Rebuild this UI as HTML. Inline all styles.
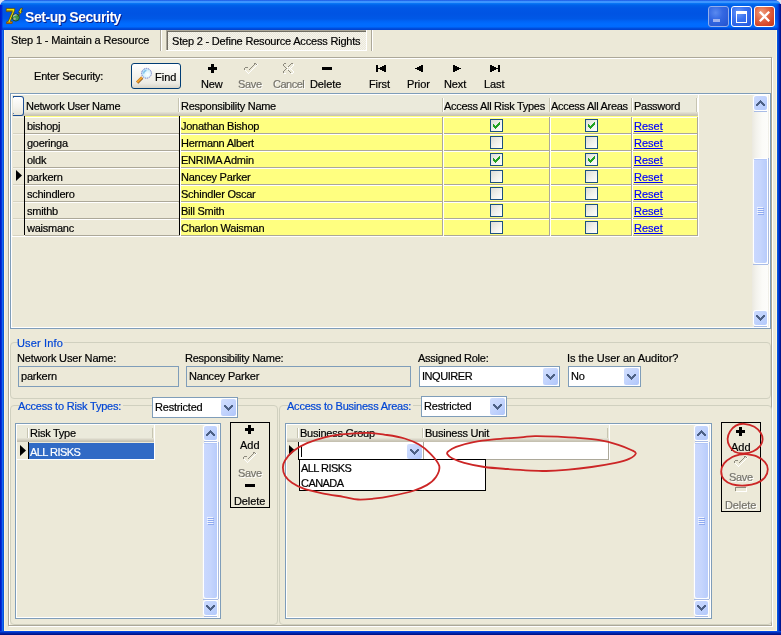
<!DOCTYPE html>
<html><head><meta charset="utf-8"><style>
html,body{margin:0;padding:0;width:781px;height:635px;overflow:hidden;background:#dbe4f5}
#w{position:relative;width:781px;height:635px;overflow:hidden}
#w div{position:absolute;box-sizing:content-box}
.t{font-family:"Liberation Sans",sans-serif;font-size:11px;line-height:13px;white-space:nowrap;color:#000;transform:translateZ(0);-webkit-text-stroke:0.2px currentColor}
</style></head><body><div id="w">
<div style="left:0;top:0;width:781px;height:635px;background:#0831d9;border-radius:7px 7px 0 0"></div>
<div style="left:0;top:0;width:781px;height:30px;border-radius:7px 7px 0 0;background:linear-gradient(to bottom,#0a3ad8 0px,#3d95ff 1px,#3d95ff 3px,#0a7cf8 3px,#0062ea 5px,#0057e5 8px,#0054e3 14px,#0058e6 19px,#0063f5 21px,#006cff 24px,#006afe 27px,#0052e0 28px,#0040cf 30px)"></div>
<div style="left:0px;top:30px;width:1px;height:605px;background:#001ec4"></div>
<div style="left:1px;top:30px;width:1px;height:605px;background:#0831d9"></div>
<div style="left:2px;top:30px;width:1px;height:605px;background:#166aee"></div>
<div style="left:3px;top:30px;width:1px;height:605px;background:#0855dd"></div>
<div style="left:777px;top:30px;width:1px;height:605px;background:#0855dd"></div>
<div style="left:778px;top:30px;width:1px;height:605px;background:#0040d0"></div>
<div style="left:779px;top:30px;width:1px;height:605px;background:#0021b0"></div>
<div style="left:780px;top:30px;width:1px;height:605px;background:#001590"></div>
<div style="left:0px;top:631px;width:781px;height:1px;background:#0848e0"></div>
<div style="left:0px;top:632px;width:781px;height:1px;background:#0030c0"></div>
<div style="left:0px;top:633px;width:781px;height:1px;background:#0020a0"></div>
<div style="left:0px;top:634px;width:781px;height:1px;background:#001288"></div>
<div style="left:4px;top:30px;width:773px;height:601px;background:#ece9d8"></div>
<div style="left:4px;top:30px;width:1px;height:601px;background:#fbf5dc"></div>
<div style="left:776px;top:30px;width:1px;height:601px;background:#fff8dc"></div>
<div style="left:4px;top:630px;width:773px;height:1px;background:#fff8dc"></div>
<svg style="position:absolute;left:3px;top:4px;" width="22" height="22" viewBox="0 0 22 22" shape-rendering="crispEdges">
<g shape-rendering="auto">
<defs><linearGradient id="y7" x1="0" y1="0" x2="0" y2="1"><stop offset="0" stop-color="#ffff40"/><stop offset="0.6" stop-color="#e8d800"/><stop offset="1" stop-color="#8a6a00"/></linearGradient></defs>
<path d="M3.2 4.4 H11.8 L11.6 6.6 L7.2 17.6 L9.4 17.6 L9.2 19.4 H3.4 L3.8 17.6 L5.2 17.6 L9.4 7.6 H3.4 Z" fill="#f4e800" stroke="#5a4000" stroke-width="0.7"/>
<path d="M3.6 7.0 H9.6 L9.9 6.2 H3.6 Z" fill="#9a7a00"/>
<path d="M3.6 19.0 H9.0" stroke="#b03a00" stroke-width="1.1"/>
<circle cx="12.8" cy="13.5" r="3.6" fill="#3f9a4a" stroke="#1a3a20" stroke-width="0.8"/>
<path d="M10.2 12.5 Q11.5 10.6 13.6 11.0" stroke="#c8c8c8" stroke-width="1.2" fill="none"/>
<circle cx="11.6" cy="14.8" r="1.2" fill="#a0a8a0"/>
<path d="M17.6 4.2 L15.4 8.6 L17.0 8.6 L15.0 12.4 L19.4 7.4 L17.8 7.4 L19.6 4.2 Z" fill="#ffee00" stroke="#3a3000" stroke-width="0.6"/>
</g></svg>
<div class="t" style="left:25px;top:9px;font-weight:bold;font-size:14px;line-height:16px;color:#fff;text-shadow:1px 1px 0 #0a1f8a;letter-spacing:-0.45px;-webkit-text-stroke:0">Set-up Security</div>
<div style="left:708px;top:6px;width:19px;height:19px;border:1px solid #94aeea;border-radius:3px;background:radial-gradient(circle at 35% 30%, #5a8af0 0%, #3468e2 40%, #2a5cd8 75%, #2450c8 100%)"></div>
<div style="left:713px;top:19px;width:7px;height:3px;background:#9fb2ef"></div>
<div style="left:731px;top:6px;width:19px;height:19px;border:1px solid #ffffff;border-radius:3px;background:radial-gradient(circle at 35% 30%, #6a9af8 0%, #3a72f0 40%, #2c62e4 75%, #2654d4 100%)"></div>
<div style="left:736px;top:11px;width:9px;height:8px;border:1px solid #fff;border-top-width:3px;"></div>
<div style="left:754px;top:6px;width:19px;height:19px;border:1px solid #ffffff;border-radius:3px;background:radial-gradient(circle at 35% 30%, #f0a080 0%, #e36d4a 35%, #d6482a 70%, #c43a1c 100%)"></div>
<svg style="position:absolute;left:758px;top:10px;" width="13" height="13" viewBox="0 0 13 13" shape-rendering="crispEdges"><path d="M1.8 1.8 L11.2 11.2 M11.2 1.8 L1.8 11.2" stroke="#fff" stroke-width="2.3" shape-rendering="auto"/></svg>
<div style="left:776px;top:4px;width:5px;height:26px;background:linear-gradient(to right,rgba(0,60,230,0) 0%,rgba(0,50,215,0.6) 40%,#0020b0 70%,#000e80 100%)"></div>
<div style="left:0px;top:5px;width:3px;height:25px;background:linear-gradient(to right,#0018c8 0%,#0028d8 60%,rgba(0,60,230,0) 100%)"></div>
<div style="left:777px;top:0;width:4px;height:4px;background:transparent"></div>
<div class="t" style="left:11px;top:34px;letter-spacing:-0.15px;">Step 1 - Maintain a Resource</div>
<div style="left:160px;top:30px;width:1px;height:21px;background:#aca899"></div>
<div style="left:161px;top:30px;width:1px;height:21px;background:#ffffff"></div>
<div style="left:166px;top:30px;width:201px;height:21px;background:#ffffff"></div>
<div style="left:166px;top:30px;width:200px;height:20px;background-color:#f4f3ee;background-image:linear-gradient(45deg,#ece9d8 25%,transparent 25%,transparent 75%,#ece9d8 75%),linear-gradient(45deg,#ece9d8 25%,transparent 25%,transparent 75%,#ece9d8 75%);background-size:2px 2px;background-position:0 0,1px 1px"></div>
<div style="left:166px;top:30px;width:200px;height:1px;background:#aca899"></div>
<div style="left:166px;top:30px;width:1px;height:20px;background:#aca899"></div>
<div style="left:167px;top:31px;width:199px;height:1px;background:#716f64"></div>
<div style="left:167px;top:31px;width:1px;height:19px;background:#716f64"></div>
<div class="t" style="left:172px;top:35px;letter-spacing:-0.19px;">Step 2 - Define Resource Access Rights</div>
<div style="left:371px;top:30px;width:1px;height:21px;background:#aca899"></div>
<div style="left:372px;top:30px;width:1px;height:21px;background:#ffffff"></div>
<div style="left:9px;top:58px;width:762px;height:567px;border:1px solid #fff"></div>
<div style="left:8px;top:57px;width:762px;height:567px;border:1px solid #aca899"></div>
<div class="t" style="left:34px;top:70px;letter-spacing:-0.2px;">Enter Security:</div>
<div style="left:131px;top:63px;width:48px;height:24px;border:1px solid #003c74;border-radius:3px;background:linear-gradient(to bottom,#ffffff 0%,#f6f5f0 40%,#ecebe4 80%,#d8d4c8 100%)"></div>
<svg style="position:absolute;left:134px;top:66px;" width="20" height="20" viewBox="0 0 20 20" shape-rendering="crispEdges"><g shape-rendering="auto">
<defs><radialGradient id="lens" cx="0.62" cy="0.62" r="0.7"><stop offset="0" stop-color="#ffffff"/><stop offset="0.45" stop-color="#dff6fd"/><stop offset="1" stop-color="#a8d8f4"/></radialGradient></defs>
<path d="M3.2 16.6 L8.2 11.6" stroke="#7a4a10" stroke-width="3" stroke-linecap="butt"/>
<path d="M3.0 16.4 L8.0 11.4" stroke="#f0a030" stroke-width="2.2" stroke-linecap="butt"/>
<circle cx="12.5" cy="7.3" r="4.9" fill="url(#lens)" stroke="#6f74c8" stroke-width="1" stroke-dasharray="1.2 0.8"/>
<path d="M9.6 7.6 Q9.8 5.0 12.4 4.4" stroke="#7cc0ec" stroke-width="1.2" fill="none"/>
</g></svg>
<div class="t" style="left:155px;top:71px;letter-spacing:0px;">Find</div>
<div style="left:211px;top:64px;width:3px;height:9px;background:#000"></div>
<div style="left:208px;top:67px;width:9px;height:3px;background:#000"></div>
<div class="t" style="left:201px;top:78px;letter-spacing:-0.1px;">New</div>
<div style="left:245px;top:70px;width:1px;height:1px;background:#ffffff"></div>
<div style="left:246px;top:71px;width:1px;height:1px;background:#ffffff"></div>
<div style="left:247px;top:72px;width:1px;height:1px;background:#ffffff"></div>
<div style="left:248px;top:73px;width:1px;height:1px;background:#ffffff"></div>
<div style="left:249px;top:72px;width:1px;height:1px;background:#ffffff"></div>
<div style="left:250px;top:71px;width:1px;height:1px;background:#ffffff"></div>
<div style="left:251px;top:70px;width:1px;height:1px;background:#ffffff"></div>
<div style="left:252px;top:69px;width:1px;height:1px;background:#ffffff"></div>
<div style="left:253px;top:68px;width:1px;height:1px;background:#ffffff"></div>
<div style="left:254px;top:67px;width:1px;height:1px;background:#ffffff"></div>
<div style="left:255px;top:66px;width:1px;height:1px;background:#ffffff"></div>
<div style="left:256px;top:65px;width:1px;height:1px;background:#ffffff"></div>
<div style="left:257px;top:64px;width:1px;height:1px;background:#ffffff"></div>
<div style="left:244px;top:68px;width:1px;height:1px;background:#8d8a7e"></div>
<div style="left:244px;top:69px;width:1px;height:1px;background:#8d8a7e"></div>
<div style="left:245px;top:67px;width:1px;height:1px;background:#8d8a7e"></div>
<div style="left:246px;top:67px;width:1px;height:1px;background:#8d8a7e"></div>
<div style="left:247px;top:67px;width:1px;height:1px;background:#8d8a7e"></div>
<div style="left:249px;top:69px;width:1px;height:1px;background:#8d8a7e"></div>
<div style="left:250px;top:68px;width:1px;height:1px;background:#8d8a7e"></div>
<div style="left:251px;top:67px;width:1px;height:1px;background:#8d8a7e"></div>
<div style="left:252px;top:66px;width:1px;height:1px;background:#8d8a7e"></div>
<div style="left:253px;top:65px;width:1px;height:1px;background:#8d8a7e"></div>
<div style="left:254px;top:64px;width:1px;height:1px;background:#8d8a7e"></div>
<div style="left:254px;top:63px;width:1px;height:1px;background:#8d8a7e"></div>
<div style="left:255px;top:63px;width:1px;height:1px;background:#8d8a7e"></div>
<div style="left:256px;top:64px;width:1px;height:1px;background:#8d8a7e"></div>
<div class="t" style="left:238px;top:78px;letter-spacing:-0.35px;color:#75736a;text-shadow:1px 1px 0 #fff">Save</div>
<div style="left:293px;top:64px;width:1px;height:1px;background:#ffffff"></div>
<div style="left:293px;top:65px;width:1px;height:1px;background:#ffffff"></div>
<div style="left:292px;top:66px;width:1px;height:1px;background:#ffffff"></div>
<div style="left:291px;top:67px;width:1px;height:1px;background:#ffffff"></div>
<div style="left:290px;top:68px;width:1px;height:1px;background:#ffffff"></div>
<div style="left:291px;top:69px;width:1px;height:1px;background:#ffffff"></div>
<div style="left:292px;top:70px;width:1px;height:1px;background:#ffffff"></div>
<div style="left:293px;top:71px;width:1px;height:1px;background:#ffffff"></div>
<div style="left:293px;top:72px;width:1px;height:1px;background:#ffffff"></div>
<div style="left:284px;top:73px;width:1px;height:1px;background:#ffffff"></div>
<div style="left:285px;top:73px;width:1px;height:1px;background:#ffffff"></div>
<div style="left:292px;top:73px;width:1px;height:1px;background:#ffffff"></div>
<div style="left:291px;top:73px;width:1px;height:1px;background:#ffffff"></div>
<div style="left:287px;top:69px;width:1px;height:1px;background:#ffffff"></div>
<div style="left:287px;top:67px;width:1px;height:1px;background:#ffffff"></div>
<div style="left:289px;top:67px;width:1px;height:1px;background:#ffffff"></div>
<div style="left:289px;top:69px;width:1px;height:1px;background:#ffffff"></div>
<div style="left:284px;top:63px;width:1px;height:1px;background:#8d8a7e"></div>
<div style="left:285px;top:63px;width:1px;height:1px;background:#8d8a7e"></div>
<div style="left:283px;top:64px;width:1px;height:1px;background:#8d8a7e"></div>
<div style="left:283px;top:65px;width:1px;height:1px;background:#8d8a7e"></div>
<div style="left:284px;top:66px;width:1px;height:1px;background:#8d8a7e"></div>
<div style="left:285px;top:67px;width:1px;height:1px;background:#8d8a7e"></div>
<div style="left:286px;top:68px;width:1px;height:1px;background:#8d8a7e"></div>
<div style="left:285px;top:69px;width:1px;height:1px;background:#8d8a7e"></div>
<div style="left:284px;top:70px;width:1px;height:1px;background:#8d8a7e"></div>
<div style="left:283px;top:71px;width:1px;height:1px;background:#8d8a7e"></div>
<div style="left:283px;top:72px;width:1px;height:1px;background:#8d8a7e"></div>
<div style="left:288px;top:66px;width:1px;height:1px;background:#8d8a7e"></div>
<div style="left:289px;top:65px;width:1px;height:1px;background:#8d8a7e"></div>
<div style="left:290px;top:64px;width:1px;height:1px;background:#8d8a7e"></div>
<div style="left:291px;top:63px;width:1px;height:1px;background:#8d8a7e"></div>
<div style="left:292px;top:63px;width:1px;height:1px;background:#8d8a7e"></div>
<div style="left:288px;top:70px;width:1px;height:1px;background:#8d8a7e"></div>
<div style="left:289px;top:71px;width:1px;height:1px;background:#8d8a7e"></div>
<div style="left:290px;top:72px;width:1px;height:1px;background:#8d8a7e"></div>
<div class="t" style="left:273px;top:78px;letter-spacing:-0.5px;color:#75736a;text-shadow:1px 1px 0 #fff">Cancel</div>
<div style="left:322px;top:67px;width:10px;height:3px;background:#000"></div>
<div class="t" style="left:310px;top:78px;letter-spacing:-0.1px;">Delete</div>
<div style="left:376px;top:65px;width:2px;height:7px;background:#000"></div>
<div style="left:384px;top:65px;width:2px;height:1px;background:#000"></div>
<div style="left:382px;top:66px;width:4px;height:1px;background:#000"></div>
<div style="left:380px;top:67px;width:6px;height:1px;background:#000"></div>
<div style="left:378px;top:68px;width:8px;height:1px;background:#000"></div>
<div style="left:380px;top:69px;width:6px;height:1px;background:#000"></div>
<div style="left:382px;top:70px;width:4px;height:1px;background:#000"></div>
<div style="left:384px;top:71px;width:2px;height:1px;background:#000"></div>
<div class="t" style="left:369px;top:78px;letter-spacing:-0.1px;">First</div>
<div style="left:421px;top:65px;width:2px;height:1px;background:#000"></div>
<div style="left:419px;top:66px;width:4px;height:1px;background:#000"></div>
<div style="left:417px;top:67px;width:6px;height:1px;background:#000"></div>
<div style="left:415px;top:68px;width:8px;height:1px;background:#000"></div>
<div style="left:417px;top:69px;width:6px;height:1px;background:#000"></div>
<div style="left:419px;top:70px;width:4px;height:1px;background:#000"></div>
<div style="left:421px;top:71px;width:2px;height:1px;background:#000"></div>
<div class="t" style="left:407px;top:78px;letter-spacing:-0.1px;">Prior</div>
<div style="left:453px;top:65px;width:2px;height:1px;background:#000"></div>
<div style="left:453px;top:66px;width:4px;height:1px;background:#000"></div>
<div style="left:453px;top:67px;width:6px;height:1px;background:#000"></div>
<div style="left:453px;top:68px;width:8px;height:1px;background:#000"></div>
<div style="left:453px;top:69px;width:6px;height:1px;background:#000"></div>
<div style="left:453px;top:70px;width:4px;height:1px;background:#000"></div>
<div style="left:453px;top:71px;width:2px;height:1px;background:#000"></div>
<div class="t" style="left:444px;top:78px;letter-spacing:-0.1px;">Next</div>
<div style="left:490px;top:65px;width:2px;height:1px;background:#000"></div>
<div style="left:490px;top:66px;width:4px;height:1px;background:#000"></div>
<div style="left:490px;top:67px;width:6px;height:1px;background:#000"></div>
<div style="left:490px;top:68px;width:8px;height:1px;background:#000"></div>
<div style="left:490px;top:69px;width:6px;height:1px;background:#000"></div>
<div style="left:490px;top:70px;width:4px;height:1px;background:#000"></div>
<div style="left:490px;top:71px;width:2px;height:1px;background:#000"></div>
<div style="left:498px;top:65px;width:2px;height:7px;background:#000"></div>
<div class="t" style="left:484px;top:78px;letter-spacing:-0.1px;">Last</div>
<div style="left:10px;top:93px;width:759px;height:234px;border:1px solid #7f9db9;background:#ece9d8"></div>
<div style="left:11px;top:94px;width:757px;height:232px;border:1px solid #fff"></div>
<div style="left:752px;top:95px;width:17px;height:232px;background:linear-gradient(to right,#ebe9e0 0%,#f3f2ec 25%,#fbfbf8 60%,#fdfdfb 100%)"></div>
<div style="left:768px;top:95px;width:1px;height:232px;background:#f0efe8"></div>
<div style="left:753px;top:95px;width:15px;height:16px;background:#fff;border-radius:3px"></div>
<div style="left:754px;top:96px;width:13px;height:14px;border-radius:2px;background:linear-gradient(135deg,#cad9fe 0%,#c1d3fd 45%,#b3c9fb 100%)"></div>
<div style="left:754px;top:111px;width:13px;height:1px;background:#a9bce6"></div>
<div style="left:760px;top:100px;width:1px;height:1px;background:#4d6185"></div>
<div style="left:759px;top:101px;width:3px;height:1px;background:#4d6185"></div>
<div style="left:758px;top:102px;width:5px;height:1px;background:#4d6185"></div>
<div style="left:757px;top:103px;width:3px;height:1px;background:#4d6185"></div>
<div style="left:761px;top:103px;width:3px;height:1px;background:#4d6185"></div>
<div style="left:756px;top:104px;width:3px;height:1px;background:#4d6185"></div>
<div style="left:762px;top:104px;width:3px;height:1px;background:#4d6185"></div>
<div style="left:756px;top:105px;width:2px;height:1px;background:#4d6185"></div>
<div style="left:763px;top:105px;width:2px;height:1px;background:#4d6185"></div>
<div style="left:753px;top:310px;width:15px;height:16px;background:#fff;border-radius:3px"></div>
<div style="left:754px;top:311px;width:13px;height:14px;border-radius:2px;background:linear-gradient(135deg,#cad9fe 0%,#c1d3fd 45%,#b3c9fb 100%)"></div>
<div style="left:754px;top:326px;width:13px;height:1px;background:#a9bce6"></div>
<div style="left:756px;top:315px;width:2px;height:1px;background:#4d6185"></div>
<div style="left:763px;top:315px;width:2px;height:1px;background:#4d6185"></div>
<div style="left:756px;top:316px;width:3px;height:1px;background:#4d6185"></div>
<div style="left:762px;top:316px;width:3px;height:1px;background:#4d6185"></div>
<div style="left:757px;top:317px;width:3px;height:1px;background:#4d6185"></div>
<div style="left:761px;top:317px;width:3px;height:1px;background:#4d6185"></div>
<div style="left:758px;top:318px;width:5px;height:1px;background:#4d6185"></div>
<div style="left:759px;top:319px;width:3px;height:1px;background:#4d6185"></div>
<div style="left:760px;top:320px;width:1px;height:1px;background:#4d6185"></div>
<div style="left:753px;top:158px;width:15px;height:106px;background:#fff;border-radius:3px"></div>
<div style="left:754px;top:159px;width:13px;height:104px;border-radius:2px;background:linear-gradient(to right,#cad8fe 0%,#c5d5fd 50%,#b8ccfb 100%)"></div>
<div style="left:754px;top:159px;width:13px;height:1px;background:#b4c8f8"></div>
<div style="left:753px;top:264px;width:15px;height:1px;background:#a9bce6"></div>
<div style="left:768px;top:158px;width:1px;height:106px;background:#a9bbe0"></div>
<div style="left:757px;top:207px;width:6px;height:1px;background:#f0f4fe"></div>
<div style="left:758px;top:208px;width:6px;height:1px;background:#8faaf0"></div>
<div style="left:757px;top:209px;width:6px;height:1px;background:#f0f4fe"></div>
<div style="left:758px;top:210px;width:6px;height:1px;background:#8faaf0"></div>
<div style="left:757px;top:211px;width:6px;height:1px;background:#f0f4fe"></div>
<div style="left:758px;top:212px;width:6px;height:1px;background:#8faaf0"></div>
<div style="left:757px;top:213px;width:6px;height:1px;background:#f0f4fe"></div>
<div style="left:758px;top:214px;width:6px;height:1px;background:#8faaf0"></div>
<div style="left:12px;top:95px;width:686px;height:21px;background:#ebeadb"></div>
<div style="left:12px;top:112px;width:686px;height:1px;background:#e2e0d2"></div>
<div style="left:12px;top:113px;width:686px;height:1px;background:#dad7c8"></div>
<div style="left:12px;top:114px;width:686px;height:1px;background:#d0ccbd"></div>
<div style="left:12px;top:115px;width:686px;height:1px;background:#c8c4b4"></div>
<div style="left:13px;top:96px;width:10px;height:18px;border:1px solid #1c4f96;border-left:0;border-radius:0 3px 3px 0;background:linear-gradient(to bottom,#ffffff,#f3f2ec 60%,#e6e3d6)"></div>
<div style="left:13px;top:97px;width:1px;height:1px;background:#5a7fb8"></div>
<div style="left:13px;top:113px;width:1px;height:1px;background:#5a7fb8"></div>
<div style="left:178px;top:98px;width:1px;height:14px;background:#c7c5b2"></div>
<div style="left:179px;top:98px;width:1px;height:14px;background:#ffffff"></div>
<div style="left:442px;top:98px;width:1px;height:14px;background:#c7c5b2"></div>
<div style="left:443px;top:98px;width:1px;height:14px;background:#ffffff"></div>
<div style="left:549px;top:98px;width:1px;height:14px;background:#c7c5b2"></div>
<div style="left:550px;top:98px;width:1px;height:14px;background:#ffffff"></div>
<div style="left:631px;top:98px;width:1px;height:14px;background:#c7c5b2"></div>
<div style="left:632px;top:98px;width:1px;height:14px;background:#ffffff"></div>
<div style="left:696px;top:98px;width:1px;height:14px;background:#c7c5b2"></div>
<div style="left:697px;top:98px;width:1px;height:14px;background:#ffffff"></div>
<div class="t" style="left:26px;top:100px;letter-spacing:-0.28px;">Network User Name</div>
<div class="t" style="left:181px;top:100px;letter-spacing:-0.28px;">Responsibility Name</div>
<div class="t" style="left:444px;top:100px;letter-spacing:-0.28px;">Access All Risk Types</div>
<div class="t" style="left:551px;top:100px;letter-spacing:-0.28px;">Access All Areas</div>
<div class="t" style="left:634px;top:100px;letter-spacing:-0.28px;">Password</div>
<div style="left:24px;top:116px;width:674px;height:1px;background:#ffff80"></div>
<div style="left:12px;top:117px;width:12px;height:17px;background:#ece9d8"></div>
<div style="left:13px;top:133px;width:11px;height:1px;background:#d6d3c2"></div>
<div style="left:13px;top:117px;width:11px;height:1px;background:#f4f2ea"></div>
<div style="left:25px;top:117px;width:153px;height:17px;background:#ece9d8"></div>
<div style="left:25px;top:117px;width:153px;height:1px;background:#ffffff"></div>
<div style="left:25px;top:133px;width:154px;height:1px;background:#aca899"></div>
<div style="left:180px;top:117px;width:517px;height:17px;background:#ffff80"></div>
<div style="left:180px;top:117px;width:517px;height:1px;background:#ffffff"></div>
<div style="left:179px;top:133px;width:519px;height:1px;background:#aca899"></div>
<div style="left:442px;top:117px;width:1px;height:17px;background:#aca899"></div>
<div style="left:443px;top:117px;width:1px;height:17px;background:#ffffff"></div>
<div style="left:549px;top:117px;width:1px;height:17px;background:#aca899"></div>
<div style="left:550px;top:117px;width:1px;height:17px;background:#ffffff"></div>
<div style="left:631px;top:117px;width:1px;height:17px;background:#aca899"></div>
<div style="left:632px;top:117px;width:1px;height:17px;background:#ffffff"></div>
<div style="left:697px;top:117px;width:1px;height:17px;background:#aca899"></div>
<div style="left:180px;top:117px;width:1px;height:17px;background:#ffffff"></div>
<div class="t" style="left:27px;top:120px;letter-spacing:-0.25px;">bishopj</div>
<div class="t" style="left:181px;top:120px;letter-spacing:-0.25px;">Jonathan Bishop</div>
<div style="left:490px;top:119px;width:11px;height:11px;border:1px solid #1c5180;background:linear-gradient(135deg,#dcdcd7 0%,#f0f0ea 50%,#ffffff 100%)"></div>
<div style="left:499px;top:122px;width:1px;height:1px;background:#21a121"></div>
<div style="left:498px;top:123px;width:2px;height:1px;background:#21a121"></div>
<div style="left:493px;top:124px;width:1px;height:1px;background:#21a121"></div>
<div style="left:497px;top:124px;width:3px;height:1px;background:#21a121"></div>
<div style="left:493px;top:125px;width:2px;height:1px;background:#21a121"></div>
<div style="left:496px;top:125px;width:3px;height:1px;background:#21a121"></div>
<div style="left:493px;top:126px;width:5px;height:1px;background:#21a121"></div>
<div style="left:494px;top:127px;width:3px;height:1px;background:#21a121"></div>
<div style="left:495px;top:128px;width:1px;height:1px;background:#21a121"></div>
<div style="left:585px;top:119px;width:11px;height:11px;border:1px solid #1c5180;background:linear-gradient(135deg,#dcdcd7 0%,#f0f0ea 50%,#ffffff 100%)"></div>
<div style="left:594px;top:122px;width:1px;height:1px;background:#21a121"></div>
<div style="left:593px;top:123px;width:2px;height:1px;background:#21a121"></div>
<div style="left:588px;top:124px;width:1px;height:1px;background:#21a121"></div>
<div style="left:592px;top:124px;width:3px;height:1px;background:#21a121"></div>
<div style="left:588px;top:125px;width:2px;height:1px;background:#21a121"></div>
<div style="left:591px;top:125px;width:3px;height:1px;background:#21a121"></div>
<div style="left:588px;top:126px;width:5px;height:1px;background:#21a121"></div>
<div style="left:589px;top:127px;width:3px;height:1px;background:#21a121"></div>
<div style="left:590px;top:128px;width:1px;height:1px;background:#21a121"></div>
<div class="t" style="left:634px;top:120px;color:#0000ff;text-decoration:underline;letter-spacing:0px">Reset</div>
<div style="left:12px;top:134px;width:12px;height:17px;background:#ece9d8"></div>
<div style="left:13px;top:150px;width:11px;height:1px;background:#d6d3c2"></div>
<div style="left:13px;top:134px;width:11px;height:1px;background:#f4f2ea"></div>
<div style="left:25px;top:134px;width:153px;height:17px;background:#ece9d8"></div>
<div style="left:25px;top:134px;width:153px;height:1px;background:#ffffff"></div>
<div style="left:25px;top:150px;width:154px;height:1px;background:#aca899"></div>
<div style="left:180px;top:134px;width:517px;height:17px;background:#ffff80"></div>
<div style="left:180px;top:134px;width:517px;height:1px;background:#ffffff"></div>
<div style="left:179px;top:150px;width:519px;height:1px;background:#aca899"></div>
<div style="left:442px;top:134px;width:1px;height:17px;background:#aca899"></div>
<div style="left:443px;top:134px;width:1px;height:17px;background:#ffffff"></div>
<div style="left:549px;top:134px;width:1px;height:17px;background:#aca899"></div>
<div style="left:550px;top:134px;width:1px;height:17px;background:#ffffff"></div>
<div style="left:631px;top:134px;width:1px;height:17px;background:#aca899"></div>
<div style="left:632px;top:134px;width:1px;height:17px;background:#ffffff"></div>
<div style="left:697px;top:134px;width:1px;height:17px;background:#aca899"></div>
<div style="left:180px;top:134px;width:1px;height:17px;background:#ffffff"></div>
<div class="t" style="left:27px;top:137px;letter-spacing:-0.25px;">goeringa</div>
<div class="t" style="left:181px;top:137px;letter-spacing:-0.25px;">Hermann Albert</div>
<div style="left:490px;top:136px;width:11px;height:11px;border:1px solid #1c5180;background:linear-gradient(135deg,#dcdcd7 0%,#f0f0ea 50%,#ffffff 100%)"></div>
<div style="left:585px;top:136px;width:11px;height:11px;border:1px solid #1c5180;background:linear-gradient(135deg,#dcdcd7 0%,#f0f0ea 50%,#ffffff 100%)"></div>
<div class="t" style="left:634px;top:137px;color:#0000ff;text-decoration:underline;letter-spacing:0px">Reset</div>
<div style="left:12px;top:151px;width:12px;height:17px;background:#ece9d8"></div>
<div style="left:13px;top:167px;width:11px;height:1px;background:#d6d3c2"></div>
<div style="left:13px;top:151px;width:11px;height:1px;background:#f4f2ea"></div>
<div style="left:25px;top:151px;width:153px;height:17px;background:#ece9d8"></div>
<div style="left:25px;top:151px;width:153px;height:1px;background:#ffffff"></div>
<div style="left:25px;top:167px;width:154px;height:1px;background:#aca899"></div>
<div style="left:180px;top:151px;width:517px;height:17px;background:#ffff80"></div>
<div style="left:180px;top:151px;width:517px;height:1px;background:#ffffff"></div>
<div style="left:179px;top:167px;width:519px;height:1px;background:#aca899"></div>
<div style="left:442px;top:151px;width:1px;height:17px;background:#aca899"></div>
<div style="left:443px;top:151px;width:1px;height:17px;background:#ffffff"></div>
<div style="left:549px;top:151px;width:1px;height:17px;background:#aca899"></div>
<div style="left:550px;top:151px;width:1px;height:17px;background:#ffffff"></div>
<div style="left:631px;top:151px;width:1px;height:17px;background:#aca899"></div>
<div style="left:632px;top:151px;width:1px;height:17px;background:#ffffff"></div>
<div style="left:697px;top:151px;width:1px;height:17px;background:#aca899"></div>
<div style="left:180px;top:151px;width:1px;height:17px;background:#ffffff"></div>
<div class="t" style="left:27px;top:154px;letter-spacing:-0.25px;">oldk</div>
<div class="t" style="left:181px;top:154px;letter-spacing:-0.25px;">ENRIMA Admin</div>
<div style="left:490px;top:153px;width:11px;height:11px;border:1px solid #1c5180;background:linear-gradient(135deg,#dcdcd7 0%,#f0f0ea 50%,#ffffff 100%)"></div>
<div style="left:499px;top:156px;width:1px;height:1px;background:#21a121"></div>
<div style="left:498px;top:157px;width:2px;height:1px;background:#21a121"></div>
<div style="left:493px;top:158px;width:1px;height:1px;background:#21a121"></div>
<div style="left:497px;top:158px;width:3px;height:1px;background:#21a121"></div>
<div style="left:493px;top:159px;width:2px;height:1px;background:#21a121"></div>
<div style="left:496px;top:159px;width:3px;height:1px;background:#21a121"></div>
<div style="left:493px;top:160px;width:5px;height:1px;background:#21a121"></div>
<div style="left:494px;top:161px;width:3px;height:1px;background:#21a121"></div>
<div style="left:495px;top:162px;width:1px;height:1px;background:#21a121"></div>
<div style="left:585px;top:153px;width:11px;height:11px;border:1px solid #1c5180;background:linear-gradient(135deg,#dcdcd7 0%,#f0f0ea 50%,#ffffff 100%)"></div>
<div style="left:594px;top:156px;width:1px;height:1px;background:#21a121"></div>
<div style="left:593px;top:157px;width:2px;height:1px;background:#21a121"></div>
<div style="left:588px;top:158px;width:1px;height:1px;background:#21a121"></div>
<div style="left:592px;top:158px;width:3px;height:1px;background:#21a121"></div>
<div style="left:588px;top:159px;width:2px;height:1px;background:#21a121"></div>
<div style="left:591px;top:159px;width:3px;height:1px;background:#21a121"></div>
<div style="left:588px;top:160px;width:5px;height:1px;background:#21a121"></div>
<div style="left:589px;top:161px;width:3px;height:1px;background:#21a121"></div>
<div style="left:590px;top:162px;width:1px;height:1px;background:#21a121"></div>
<div class="t" style="left:634px;top:154px;color:#0000ff;text-decoration:underline;letter-spacing:0px">Reset</div>
<div style="left:12px;top:168px;width:12px;height:17px;background:#ece9d8"></div>
<div style="left:13px;top:184px;width:11px;height:1px;background:#d6d3c2"></div>
<div style="left:13px;top:168px;width:11px;height:1px;background:#f4f2ea"></div>
<div style="left:25px;top:168px;width:153px;height:17px;background:#ece9d8"></div>
<div style="left:25px;top:168px;width:153px;height:1px;background:#ffffff"></div>
<div style="left:25px;top:184px;width:154px;height:1px;background:#aca899"></div>
<div style="left:180px;top:168px;width:517px;height:17px;background:#ffff80"></div>
<div style="left:180px;top:168px;width:517px;height:1px;background:#ffffff"></div>
<div style="left:179px;top:184px;width:519px;height:1px;background:#aca899"></div>
<div style="left:442px;top:168px;width:1px;height:17px;background:#aca899"></div>
<div style="left:443px;top:168px;width:1px;height:17px;background:#ffffff"></div>
<div style="left:549px;top:168px;width:1px;height:17px;background:#aca899"></div>
<div style="left:550px;top:168px;width:1px;height:17px;background:#ffffff"></div>
<div style="left:631px;top:168px;width:1px;height:17px;background:#aca899"></div>
<div style="left:632px;top:168px;width:1px;height:17px;background:#ffffff"></div>
<div style="left:697px;top:168px;width:1px;height:17px;background:#aca899"></div>
<div style="left:180px;top:168px;width:1px;height:17px;background:#ffffff"></div>
<div class="t" style="left:27px;top:171px;letter-spacing:-0.25px;">parkern</div>
<div class="t" style="left:181px;top:171px;letter-spacing:-0.25px;">Nancey Parker</div>
<div style="left:490px;top:170px;width:11px;height:11px;border:1px solid #1c5180;background:linear-gradient(135deg,#dcdcd7 0%,#f0f0ea 50%,#ffffff 100%)"></div>
<div style="left:585px;top:170px;width:11px;height:11px;border:1px solid #1c5180;background:linear-gradient(135deg,#dcdcd7 0%,#f0f0ea 50%,#ffffff 100%)"></div>
<div class="t" style="left:634px;top:171px;color:#0000ff;text-decoration:underline;letter-spacing:0px">Reset</div>
<div style="left:12px;top:185px;width:12px;height:17px;background:#ece9d8"></div>
<div style="left:13px;top:201px;width:11px;height:1px;background:#d6d3c2"></div>
<div style="left:13px;top:185px;width:11px;height:1px;background:#f4f2ea"></div>
<div style="left:25px;top:185px;width:153px;height:17px;background:#ece9d8"></div>
<div style="left:25px;top:185px;width:153px;height:1px;background:#ffffff"></div>
<div style="left:25px;top:201px;width:154px;height:1px;background:#aca899"></div>
<div style="left:180px;top:185px;width:517px;height:17px;background:#ffff80"></div>
<div style="left:180px;top:185px;width:517px;height:1px;background:#ffffff"></div>
<div style="left:179px;top:201px;width:519px;height:1px;background:#aca899"></div>
<div style="left:442px;top:185px;width:1px;height:17px;background:#aca899"></div>
<div style="left:443px;top:185px;width:1px;height:17px;background:#ffffff"></div>
<div style="left:549px;top:185px;width:1px;height:17px;background:#aca899"></div>
<div style="left:550px;top:185px;width:1px;height:17px;background:#ffffff"></div>
<div style="left:631px;top:185px;width:1px;height:17px;background:#aca899"></div>
<div style="left:632px;top:185px;width:1px;height:17px;background:#ffffff"></div>
<div style="left:697px;top:185px;width:1px;height:17px;background:#aca899"></div>
<div style="left:180px;top:185px;width:1px;height:17px;background:#ffffff"></div>
<div class="t" style="left:27px;top:188px;letter-spacing:-0.25px;">schindlero</div>
<div class="t" style="left:181px;top:188px;letter-spacing:-0.25px;">Schindler Oscar</div>
<div style="left:490px;top:187px;width:11px;height:11px;border:1px solid #1c5180;background:linear-gradient(135deg,#dcdcd7 0%,#f0f0ea 50%,#ffffff 100%)"></div>
<div style="left:585px;top:187px;width:11px;height:11px;border:1px solid #1c5180;background:linear-gradient(135deg,#dcdcd7 0%,#f0f0ea 50%,#ffffff 100%)"></div>
<div class="t" style="left:634px;top:188px;color:#0000ff;text-decoration:underline;letter-spacing:0px">Reset</div>
<div style="left:12px;top:202px;width:12px;height:17px;background:#ece9d8"></div>
<div style="left:13px;top:218px;width:11px;height:1px;background:#d6d3c2"></div>
<div style="left:13px;top:202px;width:11px;height:1px;background:#f4f2ea"></div>
<div style="left:25px;top:202px;width:153px;height:17px;background:#ece9d8"></div>
<div style="left:25px;top:202px;width:153px;height:1px;background:#ffffff"></div>
<div style="left:25px;top:218px;width:154px;height:1px;background:#aca899"></div>
<div style="left:180px;top:202px;width:517px;height:17px;background:#ffff80"></div>
<div style="left:180px;top:202px;width:517px;height:1px;background:#ffffff"></div>
<div style="left:179px;top:218px;width:519px;height:1px;background:#aca899"></div>
<div style="left:442px;top:202px;width:1px;height:17px;background:#aca899"></div>
<div style="left:443px;top:202px;width:1px;height:17px;background:#ffffff"></div>
<div style="left:549px;top:202px;width:1px;height:17px;background:#aca899"></div>
<div style="left:550px;top:202px;width:1px;height:17px;background:#ffffff"></div>
<div style="left:631px;top:202px;width:1px;height:17px;background:#aca899"></div>
<div style="left:632px;top:202px;width:1px;height:17px;background:#ffffff"></div>
<div style="left:697px;top:202px;width:1px;height:17px;background:#aca899"></div>
<div style="left:180px;top:202px;width:1px;height:17px;background:#ffffff"></div>
<div class="t" style="left:27px;top:205px;letter-spacing:-0.25px;">smithb</div>
<div class="t" style="left:181px;top:205px;letter-spacing:-0.25px;">Bill Smith</div>
<div style="left:490px;top:204px;width:11px;height:11px;border:1px solid #1c5180;background:linear-gradient(135deg,#dcdcd7 0%,#f0f0ea 50%,#ffffff 100%)"></div>
<div style="left:585px;top:204px;width:11px;height:11px;border:1px solid #1c5180;background:linear-gradient(135deg,#dcdcd7 0%,#f0f0ea 50%,#ffffff 100%)"></div>
<div class="t" style="left:634px;top:205px;color:#0000ff;text-decoration:underline;letter-spacing:0px">Reset</div>
<div style="left:12px;top:219px;width:12px;height:17px;background:#ece9d8"></div>
<div style="left:13px;top:235px;width:11px;height:1px;background:#d6d3c2"></div>
<div style="left:13px;top:219px;width:11px;height:1px;background:#f4f2ea"></div>
<div style="left:25px;top:219px;width:153px;height:17px;background:#ece9d8"></div>
<div style="left:25px;top:219px;width:153px;height:1px;background:#ffffff"></div>
<div style="left:25px;top:235px;width:154px;height:1px;background:#aca899"></div>
<div style="left:180px;top:219px;width:517px;height:17px;background:#ffff80"></div>
<div style="left:180px;top:219px;width:517px;height:1px;background:#ffffff"></div>
<div style="left:179px;top:235px;width:519px;height:1px;background:#aca899"></div>
<div style="left:442px;top:219px;width:1px;height:17px;background:#aca899"></div>
<div style="left:443px;top:219px;width:1px;height:17px;background:#ffffff"></div>
<div style="left:549px;top:219px;width:1px;height:17px;background:#aca899"></div>
<div style="left:550px;top:219px;width:1px;height:17px;background:#ffffff"></div>
<div style="left:631px;top:219px;width:1px;height:17px;background:#aca899"></div>
<div style="left:632px;top:219px;width:1px;height:17px;background:#ffffff"></div>
<div style="left:697px;top:219px;width:1px;height:17px;background:#aca899"></div>
<div style="left:180px;top:219px;width:1px;height:17px;background:#ffffff"></div>
<div class="t" style="left:27px;top:222px;letter-spacing:-0.25px;">waismanc</div>
<div class="t" style="left:181px;top:222px;letter-spacing:-0.25px;">Charlon Waisman</div>
<div style="left:490px;top:221px;width:11px;height:11px;border:1px solid #1c5180;background:linear-gradient(135deg,#dcdcd7 0%,#f0f0ea 50%,#ffffff 100%)"></div>
<div style="left:585px;top:221px;width:11px;height:11px;border:1px solid #1c5180;background:linear-gradient(135deg,#dcdcd7 0%,#f0f0ea 50%,#ffffff 100%)"></div>
<div class="t" style="left:634px;top:222px;color:#0000ff;text-decoration:underline;letter-spacing:0px">Reset</div>
<div style="left:24px;top:116px;width:1px;height:119px;background:#000000"></div>
<div style="left:179px;top:116px;width:1px;height:119px;background:#000000"></div>
<div style="left:12px;top:236px;width:686px;height:1px;background:#ffffff"></div>
<div style="left:698px;top:95px;width:1px;height:142px;background:#ffffff"></div>
<svg style="position:absolute;left:16px;top:170px;" width="7" height="11" viewBox="0 0 7 11" shape-rendering="crispEdges"><path d="M0 0 L6 5.5 L0 11 Z" fill="#000" shape-rendering="auto"/></svg>
<div style="left:10px;top:342px;width:759px;height:55px;border:1px solid #d0d0bf;border-radius:4px"></div>
<div style="left:18px;top:338px;width:46px;height:9px;background:#ece9d8"></div>
<div class="t" style="left:17px;top:337px;letter-spacing:0.15px;color:#0046d5">User Info</div>
<div class="t" style="left:17px;top:352px;letter-spacing:-0.16px;">Network User Name:</div>
<div class="t" style="left:185px;top:352px;letter-spacing:-0.25px;">Responsibility Name:</div>
<div class="t" style="left:418px;top:352px;letter-spacing:-0.25px;">Assigned Role:</div>
<div class="t" style="left:567px;top:352px;letter-spacing:-0.02px;">Is the User an Auditor?</div>
<div style="left:18px;top:366px;width:159px;height:19px;border:1px solid #7f9db9;background:#ece9d8"></div>
<div class="t" style="left:21px;top:370px;letter-spacing:-0.2px;">parkern</div>
<div style="left:186px;top:366px;width:223px;height:19px;border:1px solid #7f9db9;background:#ece9d8"></div>
<div class="t" style="left:189px;top:370px;letter-spacing:-0.2px;">Nancey Parker</div>
<div style="left:419px;top:366px;width:139px;height:19px;border:1px solid #7f9db9;background:#fff"></div>
<div style="left:543px;top:368px;width:15px;height:17px;border-radius:2px;background:linear-gradient(135deg,#d2dffe 0%,#c3d4fd 50%,#b0c6fa 100%)"></div>
<div style="left:546px;top:374px;width:2px;height:1px;background:#4d6185"></div>
<div style="left:553px;top:374px;width:2px;height:1px;background:#4d6185"></div>
<div style="left:546px;top:375px;width:3px;height:1px;background:#4d6185"></div>
<div style="left:552px;top:375px;width:3px;height:1px;background:#4d6185"></div>
<div style="left:547px;top:376px;width:3px;height:1px;background:#4d6185"></div>
<div style="left:551px;top:376px;width:3px;height:1px;background:#4d6185"></div>
<div style="left:548px;top:377px;width:5px;height:1px;background:#4d6185"></div>
<div style="left:549px;top:378px;width:3px;height:1px;background:#4d6185"></div>
<div style="left:550px;top:379px;width:1px;height:1px;background:#4d6185"></div>
<div class="t" style="left:422px;top:370px;letter-spacing:-0.45px;">INQUIRER</div>
<div style="left:568px;top:366px;width:71px;height:19px;border:1px solid #7f9db9;background:#fff"></div>
<div style="left:624px;top:368px;width:15px;height:17px;border-radius:2px;background:linear-gradient(135deg,#d2dffe 0%,#c3d4fd 50%,#b0c6fa 100%)"></div>
<div style="left:627px;top:374px;width:2px;height:1px;background:#4d6185"></div>
<div style="left:634px;top:374px;width:2px;height:1px;background:#4d6185"></div>
<div style="left:627px;top:375px;width:3px;height:1px;background:#4d6185"></div>
<div style="left:633px;top:375px;width:3px;height:1px;background:#4d6185"></div>
<div style="left:628px;top:376px;width:3px;height:1px;background:#4d6185"></div>
<div style="left:632px;top:376px;width:3px;height:1px;background:#4d6185"></div>
<div style="left:629px;top:377px;width:5px;height:1px;background:#4d6185"></div>
<div style="left:630px;top:378px;width:3px;height:1px;background:#4d6185"></div>
<div style="left:631px;top:379px;width:1px;height:1px;background:#4d6185"></div>
<div class="t" style="left:571px;top:370px;letter-spacing:-0.2px;">No</div>
<div style="left:10px;top:405px;width:266px;height:218px;border:1px solid #d0d0bf;border-radius:4px"></div>
<div style="left:19px;top:401px;width:104px;height:9px;background:#ece9d8"></div>
<div class="t" style="left:18px;top:400px;letter-spacing:-0.2px;color:#0046d5">Access to Risk Types:</div>
<div style="left:152px;top:397px;width:84px;height:19px;border:1px solid #7f9db9;background:#fff"></div>
<div style="left:221px;top:399px;width:15px;height:17px;border-radius:2px;background:linear-gradient(135deg,#d2dffe 0%,#c3d4fd 50%,#b0c6fa 100%)"></div>
<div style="left:224px;top:405px;width:2px;height:1px;background:#4d6185"></div>
<div style="left:231px;top:405px;width:2px;height:1px;background:#4d6185"></div>
<div style="left:224px;top:406px;width:3px;height:1px;background:#4d6185"></div>
<div style="left:230px;top:406px;width:3px;height:1px;background:#4d6185"></div>
<div style="left:225px;top:407px;width:3px;height:1px;background:#4d6185"></div>
<div style="left:229px;top:407px;width:3px;height:1px;background:#4d6185"></div>
<div style="left:226px;top:408px;width:5px;height:1px;background:#4d6185"></div>
<div style="left:227px;top:409px;width:3px;height:1px;background:#4d6185"></div>
<div style="left:228px;top:410px;width:1px;height:1px;background:#4d6185"></div>
<div class="t" style="left:155px;top:401px;letter-spacing:-0.2px;">Restricted</div>
<div style="left:15px;top:423px;width:204px;height:194px;border:1px solid #7f9db9;background:#ece9d8"></div>
<div style="left:16px;top:424px;width:202px;height:192px;border:1px solid #fff"></div>
<div style="left:202px;top:425px;width:17px;height:192px;background:linear-gradient(to right,#ebe9e0 0%,#f3f2ec 25%,#fbfbf8 60%,#fdfdfb 100%)"></div>
<div style="left:218px;top:425px;width:1px;height:192px;background:#f0efe8"></div>
<div style="left:203px;top:425px;width:15px;height:16px;background:#fff;border-radius:3px"></div>
<div style="left:204px;top:426px;width:13px;height:14px;border-radius:2px;background:linear-gradient(135deg,#cad9fe 0%,#c1d3fd 45%,#b3c9fb 100%)"></div>
<div style="left:204px;top:441px;width:13px;height:1px;background:#a9bce6"></div>
<div style="left:210px;top:430px;width:1px;height:1px;background:#4d6185"></div>
<div style="left:209px;top:431px;width:3px;height:1px;background:#4d6185"></div>
<div style="left:208px;top:432px;width:5px;height:1px;background:#4d6185"></div>
<div style="left:207px;top:433px;width:3px;height:1px;background:#4d6185"></div>
<div style="left:211px;top:433px;width:3px;height:1px;background:#4d6185"></div>
<div style="left:206px;top:434px;width:3px;height:1px;background:#4d6185"></div>
<div style="left:212px;top:434px;width:3px;height:1px;background:#4d6185"></div>
<div style="left:206px;top:435px;width:2px;height:1px;background:#4d6185"></div>
<div style="left:213px;top:435px;width:2px;height:1px;background:#4d6185"></div>
<div style="left:203px;top:600px;width:15px;height:16px;background:#fff;border-radius:3px"></div>
<div style="left:204px;top:601px;width:13px;height:14px;border-radius:2px;background:linear-gradient(135deg,#cad9fe 0%,#c1d3fd 45%,#b3c9fb 100%)"></div>
<div style="left:204px;top:616px;width:13px;height:1px;background:#a9bce6"></div>
<div style="left:206px;top:605px;width:2px;height:1px;background:#4d6185"></div>
<div style="left:213px;top:605px;width:2px;height:1px;background:#4d6185"></div>
<div style="left:206px;top:606px;width:3px;height:1px;background:#4d6185"></div>
<div style="left:212px;top:606px;width:3px;height:1px;background:#4d6185"></div>
<div style="left:207px;top:607px;width:3px;height:1px;background:#4d6185"></div>
<div style="left:211px;top:607px;width:3px;height:1px;background:#4d6185"></div>
<div style="left:208px;top:608px;width:5px;height:1px;background:#4d6185"></div>
<div style="left:209px;top:609px;width:3px;height:1px;background:#4d6185"></div>
<div style="left:210px;top:610px;width:1px;height:1px;background:#4d6185"></div>
<div style="left:203px;top:442px;width:15px;height:157px;background:#fff;border-radius:3px"></div>
<div style="left:204px;top:443px;width:13px;height:155px;border-radius:2px;background:linear-gradient(to right,#cad8fe 0%,#c5d5fd 50%,#b8ccfb 100%)"></div>
<div style="left:204px;top:443px;width:13px;height:1px;background:#b4c8f8"></div>
<div style="left:203px;top:599px;width:15px;height:1px;background:#a9bce6"></div>
<div style="left:218px;top:442px;width:1px;height:157px;background:#a9bbe0"></div>
<div style="left:207px;top:517px;width:6px;height:1px;background:#f0f4fe"></div>
<div style="left:208px;top:518px;width:6px;height:1px;background:#8faaf0"></div>
<div style="left:207px;top:519px;width:6px;height:1px;background:#f0f4fe"></div>
<div style="left:208px;top:520px;width:6px;height:1px;background:#8faaf0"></div>
<div style="left:207px;top:521px;width:6px;height:1px;background:#f0f4fe"></div>
<div style="left:208px;top:522px;width:6px;height:1px;background:#8faaf0"></div>
<div style="left:207px;top:523px;width:6px;height:1px;background:#f0f4fe"></div>
<div style="left:208px;top:524px;width:6px;height:1px;background:#8faaf0"></div>
<div style="left:17px;top:425px;width:137px;height:17px;background:#ebeadb"></div>
<div style="left:17px;top:438px;width:137px;height:1px;background:#e2e0d2"></div>
<div style="left:17px;top:439px;width:137px;height:1px;background:#d8d5c6"></div>
<div style="left:17px;top:440px;width:137px;height:1px;background:#cdc9ba"></div>
<div style="left:17px;top:441px;width:137px;height:1px;background:#c5c1b1"></div>
<div style="left:27px;top:428px;width:1px;height:10px;background:#c7c5b2"></div>
<div style="left:28px;top:428px;width:1px;height:10px;background:#fff"></div>
<div style="left:152px;top:428px;width:1px;height:10px;background:#c7c5b2"></div>
<div style="left:154px;top:425px;width:1px;height:35px;background:#fff"></div>
<div class="t" style="left:30px;top:427px;letter-spacing:-0.25px;">Risk Type</div>
<div style="left:17px;top:442px;width:11px;height:18px;background:#ece9d8"></div>
<div style="left:17px;top:459px;width:137px;height:1px;background:#fff"></div>
<div style="left:29px;top:443px;width:125px;height:16px;background:#316ac5"></div>
<div style="left:29px;top:442px;width:125px;height:1px;background:#ece9d8"></div>
<div style="left:28px;top:442px;width:1px;height:17px;background:#000"></div>
<div class="t" style="left:30px;top:446px;letter-spacing:-0.55px;color:#fff">ALL RISKS</div>
<svg style="position:absolute;left:20px;top:445px;" width="7" height="11" viewBox="0 0 7 11" shape-rendering="crispEdges"><path d="M0 0 L6 5.5 L0 11 Z" fill="#000" shape-rendering="auto"/></svg>
<div style="left:230px;top:422px;width:38px;height:84px;border:1px solid #000"></div>
<div style="left:248px;top:425px;width:3px;height:9px;background:#000"></div>
<div style="left:245px;top:428px;width:9px;height:3px;background:#000"></div>
<div class="t" style="left:240px;top:439px;letter-spacing:0px;">Add</div>
<div style="left:244px;top:459px;width:1px;height:1px;background:#ffffff"></div>
<div style="left:245px;top:460px;width:1px;height:1px;background:#ffffff"></div>
<div style="left:246px;top:461px;width:1px;height:1px;background:#ffffff"></div>
<div style="left:247px;top:462px;width:1px;height:1px;background:#ffffff"></div>
<div style="left:248px;top:461px;width:1px;height:1px;background:#ffffff"></div>
<div style="left:249px;top:460px;width:1px;height:1px;background:#ffffff"></div>
<div style="left:250px;top:459px;width:1px;height:1px;background:#ffffff"></div>
<div style="left:251px;top:458px;width:1px;height:1px;background:#ffffff"></div>
<div style="left:252px;top:457px;width:1px;height:1px;background:#ffffff"></div>
<div style="left:253px;top:456px;width:1px;height:1px;background:#ffffff"></div>
<div style="left:254px;top:455px;width:1px;height:1px;background:#ffffff"></div>
<div style="left:255px;top:454px;width:1px;height:1px;background:#ffffff"></div>
<div style="left:256px;top:453px;width:1px;height:1px;background:#ffffff"></div>
<div style="left:243px;top:457px;width:1px;height:1px;background:#8d8a7e"></div>
<div style="left:243px;top:458px;width:1px;height:1px;background:#8d8a7e"></div>
<div style="left:244px;top:456px;width:1px;height:1px;background:#8d8a7e"></div>
<div style="left:245px;top:456px;width:1px;height:1px;background:#8d8a7e"></div>
<div style="left:246px;top:456px;width:1px;height:1px;background:#8d8a7e"></div>
<div style="left:248px;top:458px;width:1px;height:1px;background:#8d8a7e"></div>
<div style="left:249px;top:457px;width:1px;height:1px;background:#8d8a7e"></div>
<div style="left:250px;top:456px;width:1px;height:1px;background:#8d8a7e"></div>
<div style="left:251px;top:455px;width:1px;height:1px;background:#8d8a7e"></div>
<div style="left:252px;top:454px;width:1px;height:1px;background:#8d8a7e"></div>
<div style="left:253px;top:453px;width:1px;height:1px;background:#8d8a7e"></div>
<div style="left:253px;top:452px;width:1px;height:1px;background:#8d8a7e"></div>
<div style="left:254px;top:452px;width:1px;height:1px;background:#8d8a7e"></div>
<div style="left:255px;top:453px;width:1px;height:1px;background:#8d8a7e"></div>
<div class="t" style="left:238px;top:467px;letter-spacing:-0.35px;color:#75736a;text-shadow:1px 1px 0 #fff">Save</div>
<div style="left:245px;top:484px;width:10px;height:3px;background:#000"></div>
<div class="t" style="left:234px;top:495px;letter-spacing:-0.1px;">Delete</div>
<div style="left:279px;top:405px;width:491px;height:218px;border:1px solid #d0d0bf;border-radius:4px"></div>
<div style="left:288px;top:401px;width:125px;height:9px;background:#ece9d8"></div>
<div class="t" style="left:287px;top:400px;letter-spacing:-0.22px;color:#0046d5">Access to Business Areas:</div>
<div style="left:421px;top:396px;width:84px;height:19px;border:1px solid #7f9db9;background:#fff"></div>
<div style="left:490px;top:398px;width:15px;height:17px;border-radius:2px;background:linear-gradient(135deg,#d2dffe 0%,#c3d4fd 50%,#b0c6fa 100%)"></div>
<div style="left:493px;top:404px;width:2px;height:1px;background:#4d6185"></div>
<div style="left:500px;top:404px;width:2px;height:1px;background:#4d6185"></div>
<div style="left:493px;top:405px;width:3px;height:1px;background:#4d6185"></div>
<div style="left:499px;top:405px;width:3px;height:1px;background:#4d6185"></div>
<div style="left:494px;top:406px;width:3px;height:1px;background:#4d6185"></div>
<div style="left:498px;top:406px;width:3px;height:1px;background:#4d6185"></div>
<div style="left:495px;top:407px;width:5px;height:1px;background:#4d6185"></div>
<div style="left:496px;top:408px;width:3px;height:1px;background:#4d6185"></div>
<div style="left:497px;top:409px;width:1px;height:1px;background:#4d6185"></div>
<div class="t" style="left:424px;top:400px;letter-spacing:-0.2px;">Restricted</div>
<div style="left:285px;top:423px;width:425px;height:194px;border:1px solid #7f9db9;background:#ece9d8"></div>
<div style="left:286px;top:424px;width:423px;height:192px;border:1px solid #fff"></div>
<div style="left:693px;top:425px;width:17px;height:192px;background:linear-gradient(to right,#ebe9e0 0%,#f3f2ec 25%,#fbfbf8 60%,#fdfdfb 100%)"></div>
<div style="left:709px;top:425px;width:1px;height:192px;background:#f0efe8"></div>
<div style="left:694px;top:425px;width:15px;height:16px;background:#fff;border-radius:3px"></div>
<div style="left:695px;top:426px;width:13px;height:14px;border-radius:2px;background:linear-gradient(135deg,#cad9fe 0%,#c1d3fd 45%,#b3c9fb 100%)"></div>
<div style="left:695px;top:441px;width:13px;height:1px;background:#a9bce6"></div>
<div style="left:701px;top:430px;width:1px;height:1px;background:#4d6185"></div>
<div style="left:700px;top:431px;width:3px;height:1px;background:#4d6185"></div>
<div style="left:699px;top:432px;width:5px;height:1px;background:#4d6185"></div>
<div style="left:698px;top:433px;width:3px;height:1px;background:#4d6185"></div>
<div style="left:702px;top:433px;width:3px;height:1px;background:#4d6185"></div>
<div style="left:697px;top:434px;width:3px;height:1px;background:#4d6185"></div>
<div style="left:703px;top:434px;width:3px;height:1px;background:#4d6185"></div>
<div style="left:697px;top:435px;width:2px;height:1px;background:#4d6185"></div>
<div style="left:704px;top:435px;width:2px;height:1px;background:#4d6185"></div>
<div style="left:694px;top:600px;width:15px;height:16px;background:#fff;border-radius:3px"></div>
<div style="left:695px;top:601px;width:13px;height:14px;border-radius:2px;background:linear-gradient(135deg,#cad9fe 0%,#c1d3fd 45%,#b3c9fb 100%)"></div>
<div style="left:695px;top:616px;width:13px;height:1px;background:#a9bce6"></div>
<div style="left:697px;top:605px;width:2px;height:1px;background:#4d6185"></div>
<div style="left:704px;top:605px;width:2px;height:1px;background:#4d6185"></div>
<div style="left:697px;top:606px;width:3px;height:1px;background:#4d6185"></div>
<div style="left:703px;top:606px;width:3px;height:1px;background:#4d6185"></div>
<div style="left:698px;top:607px;width:3px;height:1px;background:#4d6185"></div>
<div style="left:702px;top:607px;width:3px;height:1px;background:#4d6185"></div>
<div style="left:699px;top:608px;width:5px;height:1px;background:#4d6185"></div>
<div style="left:700px;top:609px;width:3px;height:1px;background:#4d6185"></div>
<div style="left:701px;top:610px;width:1px;height:1px;background:#4d6185"></div>
<div style="left:694px;top:442px;width:15px;height:157px;background:#fff;border-radius:3px"></div>
<div style="left:695px;top:443px;width:13px;height:155px;border-radius:2px;background:linear-gradient(to right,#cad8fe 0%,#c5d5fd 50%,#b8ccfb 100%)"></div>
<div style="left:695px;top:443px;width:13px;height:1px;background:#b4c8f8"></div>
<div style="left:694px;top:599px;width:15px;height:1px;background:#a9bce6"></div>
<div style="left:709px;top:442px;width:1px;height:157px;background:#a9bbe0"></div>
<div style="left:698px;top:517px;width:6px;height:1px;background:#f0f4fe"></div>
<div style="left:699px;top:518px;width:6px;height:1px;background:#8faaf0"></div>
<div style="left:698px;top:519px;width:6px;height:1px;background:#f0f4fe"></div>
<div style="left:699px;top:520px;width:6px;height:1px;background:#8faaf0"></div>
<div style="left:698px;top:521px;width:6px;height:1px;background:#f0f4fe"></div>
<div style="left:699px;top:522px;width:6px;height:1px;background:#8faaf0"></div>
<div style="left:698px;top:523px;width:6px;height:1px;background:#f0f4fe"></div>
<div style="left:699px;top:524px;width:6px;height:1px;background:#8faaf0"></div>
<div style="left:287px;top:425px;width:322px;height:17px;background:#ebeadb"></div>
<div style="left:287px;top:438px;width:322px;height:1px;background:#e2e0d2"></div>
<div style="left:287px;top:439px;width:322px;height:1px;background:#d8d5c6"></div>
<div style="left:287px;top:440px;width:322px;height:1px;background:#cdc9ba"></div>
<div style="left:287px;top:441px;width:322px;height:1px;background:#c5c1b1"></div>
<div style="left:297px;top:428px;width:1px;height:10px;background:#c7c5b2"></div>
<div style="left:298px;top:428px;width:1px;height:10px;background:#fff"></div>
<div style="left:422px;top:428px;width:1px;height:10px;background:#c7c5b2"></div>
<div style="left:423px;top:428px;width:1px;height:10px;background:#fff"></div>
<div style="left:607px;top:428px;width:1px;height:10px;background:#c7c5b2"></div>
<div class="t" style="left:300px;top:427px;letter-spacing:-0.25px;">Business Group</div>
<div class="t" style="left:425px;top:427px;letter-spacing:-0.25px;">Business Unit</div>
<div style="left:287px;top:442px;width:11px;height:18px;background:#ece9d8"></div>
<div style="left:299px;top:442px;width:124px;height:17px;background:#fff"></div>
<div style="left:424px;top:442px;width:184px;height:17px;background:#fff"></div>
<div style="left:609px;top:425px;width:1px;height:35px;background:#fff"></div>
<div style="left:423px;top:442px;width:1px;height:17px;background:#aca899"></div>
<div style="left:608px;top:442px;width:1px;height:18px;background:#aca899"></div>
<div style="left:299px;top:459px;width:310px;height:1px;background:#aca899"></div>
<div style="left:298px;top:442px;width:1px;height:18px;background:#000"></div>
<div style="left:301px;top:445px;width:1px;height:12px;background:#000"></div>
<div style="left:407px;top:444px;width:15px;height:15px;border-radius:2px;background:linear-gradient(135deg,#d2dffe 0%,#c3d4fd 50%,#b0c6fa 100%)"></div>
<div style="left:410px;top:449px;width:2px;height:1px;background:#4d6185"></div>
<div style="left:417px;top:449px;width:2px;height:1px;background:#4d6185"></div>
<div style="left:410px;top:450px;width:3px;height:1px;background:#4d6185"></div>
<div style="left:416px;top:450px;width:3px;height:1px;background:#4d6185"></div>
<div style="left:411px;top:451px;width:3px;height:1px;background:#4d6185"></div>
<div style="left:415px;top:451px;width:3px;height:1px;background:#4d6185"></div>
<div style="left:412px;top:452px;width:5px;height:1px;background:#4d6185"></div>
<div style="left:413px;top:453px;width:3px;height:1px;background:#4d6185"></div>
<div style="left:414px;top:454px;width:1px;height:1px;background:#4d6185"></div>
<svg style="position:absolute;left:289px;top:445px;" width="7" height="11" viewBox="0 0 7 11" shape-rendering="crispEdges"><path d="M0 0 L6 5.5 L0 11 Z" fill="#000" shape-rendering="auto"/></svg>
<div style="left:299px;top:459px;width:185px;height:30px;border:1px solid #000;background:#fff"></div>
<div class="t" style="left:301px;top:462px;letter-spacing:-0.55px;">ALL RISKS</div>
<div class="t" style="left:301px;top:477px;letter-spacing:-0.55px;">CANADA</div>
<div style="left:721px;top:422px;width:38px;height:88px;border:1px solid #000"></div>
<div style="left:739px;top:427px;width:3px;height:9px;background:#000"></div>
<div style="left:736px;top:430px;width:9px;height:3px;background:#000"></div>
<div class="t" style="left:731px;top:441px;letter-spacing:0px;">Add</div>
<div style="left:735px;top:463px;width:1px;height:1px;background:#ffffff"></div>
<div style="left:736px;top:464px;width:1px;height:1px;background:#ffffff"></div>
<div style="left:737px;top:465px;width:1px;height:1px;background:#ffffff"></div>
<div style="left:738px;top:466px;width:1px;height:1px;background:#ffffff"></div>
<div style="left:739px;top:465px;width:1px;height:1px;background:#ffffff"></div>
<div style="left:740px;top:464px;width:1px;height:1px;background:#ffffff"></div>
<div style="left:741px;top:463px;width:1px;height:1px;background:#ffffff"></div>
<div style="left:742px;top:462px;width:1px;height:1px;background:#ffffff"></div>
<div style="left:743px;top:461px;width:1px;height:1px;background:#ffffff"></div>
<div style="left:744px;top:460px;width:1px;height:1px;background:#ffffff"></div>
<div style="left:745px;top:459px;width:1px;height:1px;background:#ffffff"></div>
<div style="left:746px;top:458px;width:1px;height:1px;background:#ffffff"></div>
<div style="left:747px;top:457px;width:1px;height:1px;background:#ffffff"></div>
<div style="left:734px;top:461px;width:1px;height:1px;background:#8d8a7e"></div>
<div style="left:734px;top:462px;width:1px;height:1px;background:#8d8a7e"></div>
<div style="left:735px;top:460px;width:1px;height:1px;background:#8d8a7e"></div>
<div style="left:736px;top:460px;width:1px;height:1px;background:#8d8a7e"></div>
<div style="left:737px;top:460px;width:1px;height:1px;background:#8d8a7e"></div>
<div style="left:739px;top:462px;width:1px;height:1px;background:#8d8a7e"></div>
<div style="left:740px;top:461px;width:1px;height:1px;background:#8d8a7e"></div>
<div style="left:741px;top:460px;width:1px;height:1px;background:#8d8a7e"></div>
<div style="left:742px;top:459px;width:1px;height:1px;background:#8d8a7e"></div>
<div style="left:743px;top:458px;width:1px;height:1px;background:#8d8a7e"></div>
<div style="left:744px;top:457px;width:1px;height:1px;background:#8d8a7e"></div>
<div style="left:744px;top:456px;width:1px;height:1px;background:#8d8a7e"></div>
<div style="left:745px;top:456px;width:1px;height:1px;background:#8d8a7e"></div>
<div style="left:746px;top:457px;width:1px;height:1px;background:#8d8a7e"></div>
<div class="t" style="left:729px;top:471px;letter-spacing:-0.35px;color:#75736a;text-shadow:1px 1px 0 #fff">Save</div>
<div style="left:736px;top:491px;width:11px;height:1px;background:#fff"></div>
<div style="left:746px;top:488px;width:1px;height:4px;background:#fff"></div>
<div style="left:735px;top:487px;width:11px;height:1px;background:#8d8a7e"></div>
<div style="left:735px;top:487px;width:1px;height:4px;background:#8d8a7e"></div>
<div class="t" style="left:725px;top:499px;letter-spacing:-0.1px;color:#75736a;text-shadow:1px 1px 0 #fff">Delete</div>
<svg style="position:absolute;left:0;top:0" width="781" height="635"><g fill="none" stroke="#cc2626" stroke-width="1.8"><path d="M368.0 432.8 C375.7 432.9 380.9 434.1 387.0 435.0 C393.1 435.9 399.3 436.9 404.6 438.5 C409.9 440.1 414.3 441.8 418.6 444.3 C422.9 446.8 426.9 450.0 430.3 453.6 C433.8 457.2 438.4 462.1 439.3 466.0 C440.2 469.9 438.1 473.8 436.0 477.0 C433.9 480.2 430.7 482.8 426.8 485.1 C422.9 487.4 418.4 489.2 412.8 491.0 C407.2 492.8 399.6 494.3 393.0 495.6 C386.4 496.9 379.0 498.1 373.2 498.7 C367.4 499.3 363.0 499.8 358.0 499.5 C353.0 499.2 349.2 497.8 343.3 496.8 C337.4 495.8 328.9 494.7 322.3 493.3 C315.7 491.9 308.7 490.4 303.6 488.6 C298.6 486.9 295.1 484.9 292.0 482.8 C288.9 480.7 286.5 478.3 285.0 475.8 C283.5 473.3 282.9 470.1 282.9 467.6 C282.9 465.1 283.3 463.3 285.0 460.6 C286.7 457.9 289.3 454.2 293.0 451.3 C296.7 448.4 301.7 445.5 307.0 443.2 C312.3 440.9 318.9 438.8 324.6 437.3 C330.3 435.8 333.8 435.1 341.0 434.4 C348.2 433.6 360.3 432.7 368.0 432.8 Z"/><path d="M535.0 436.1 C541.2 436.0 551.1 436.4 557.8 436.7 C564.5 437.0 568.3 437.1 575.3 437.7 C582.2 438.3 592.3 438.9 599.5 440.1 C606.7 441.3 612.9 443.1 618.3 444.8 C623.7 446.5 628.9 448.8 631.8 450.2 C634.7 451.6 636.2 452.1 635.8 453.5 C635.3 454.9 632.5 457.3 629.1 458.9 C625.7 460.5 621.9 461.5 615.6 462.9 C609.3 464.2 599.3 465.9 591.5 467.0 C583.7 468.1 576.4 469.0 568.6 469.7 C560.9 470.4 555.2 471.1 545.0 471.0 C534.8 470.9 517.3 469.7 507.2 469.0 C497.1 468.3 491.6 468.0 484.4 467.0 C477.2 466.0 469.6 464.4 464.2 462.9 C458.8 461.4 454.9 459.6 452.1 458.2 C449.3 456.8 448.1 455.3 447.4 454.2 C446.7 453.1 446.7 452.7 448.1 451.5 C449.6 450.3 451.9 448.4 456.1 446.8 C460.4 445.2 467.3 443.3 473.6 442.1 C479.9 440.9 486.0 440.2 493.8 439.4 C501.6 438.6 513.7 437.9 520.6 437.4 C527.5 436.8 528.8 436.2 535.0 436.1 Z"/><path d="M743.9 423.8 C747.0 424.0 751.6 425.1 754.4 426.7 C757.2 428.2 759.4 431.0 760.8 433.1 C762.2 435.2 762.7 437.4 762.6 439.5 C762.5 441.6 761.8 443.9 760.2 445.9 C758.7 447.8 756.0 449.9 753.3 451.2 C750.6 452.5 747.0 453.4 743.9 453.5 C740.8 453.6 737.0 453.1 734.6 451.8 C732.2 450.5 730.6 448.0 729.4 445.9 C728.2 443.8 727.5 441.3 727.6 438.9 C727.7 436.5 728.6 433.6 730.0 431.4 C731.4 429.2 733.5 426.9 735.8 425.6 C738.1 424.3 740.8 423.6 743.9 423.8 Z"/><path d="M746.3 454.1 C749.2 454.4 753.6 455.0 756.7 456.4 C759.8 457.8 763.0 460.1 764.9 462.2 C766.8 464.3 767.8 466.7 767.8 469.2 C767.8 471.7 766.8 475.1 764.9 477.4 C763.0 479.7 760.0 481.8 756.7 483.2 C753.4 484.6 749.2 485.3 745.1 485.5 C741.0 485.7 735.8 485.4 732.3 484.4 C728.8 483.4 726.0 481.8 724.1 479.7 C722.2 477.6 721.2 474.3 721.2 471.6 C721.2 468.9 722.2 465.8 724.1 463.4 C726.0 461.0 729.8 458.4 732.3 457.0 C734.8 455.6 737.0 455.2 739.3 454.7 C741.6 454.2 743.4 453.8 746.3 454.1 Z"/></g></svg>
</div></body></html>
